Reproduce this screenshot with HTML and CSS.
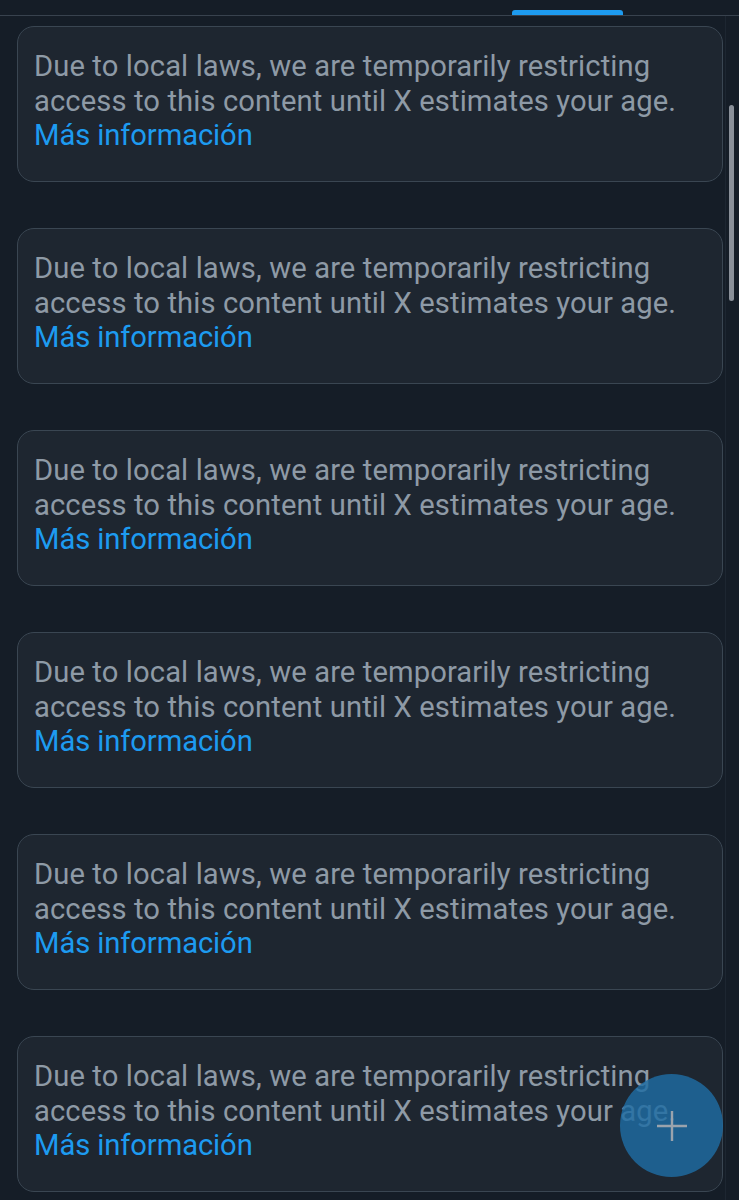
FILE: index.html
```html
<!DOCTYPE html>
<html lang="es">
<head>
<meta charset="utf-8">
<link rel="stylesheet" href="styles.css">
</head>
<body>
<div class="tabs"><div class="indicator"></div></div>
<main class="feed">
  <div class="notice"><p>Due to local laws, we are temporarily restricting access to this content until X estimates your age. <a href="#">Más información</a></p></div>
  <div class="notice"><p>Due to local laws, we are temporarily restricting access to this content until X estimates your age. <a href="#">Más información</a></p></div>
  <div class="notice"><p>Due to local laws, we are temporarily restricting access to this content until X estimates your age. <a href="#">Más información</a></p></div>
  <div class="notice"><p>Due to local laws, we are temporarily restricting access to this content until X estimates your age. <a href="#">Más información</a></p></div>
  <div class="notice"><p>Due to local laws, we are temporarily restricting access to this content until X estimates your age. <a href="#">Más información</a></p></div>
  <div class="notice"><p>Due to local laws, we are temporarily restricting access to this content until X estimates your age. <a href="#">Más información</a></p></div>
</main>
<div class="scrollbar"></div>
<button class="fab" aria-label="Nuevo post">
  <svg width="32" height="32" viewBox="0 0 32 32"><path d="M16 1v30M1 16h30" stroke="#9aa3ad" stroke-width="2.4" fill="none"/></svg>
</button>
</body>
</html>
```
FILE: styles.css
```css
html, body {
  margin: 0;
  padding: 0;
  background: #151d27;
  height: 1200px;
  overflow: hidden;
}
body {
  font-family: Roboto, "Noto Sans", sans-serif;
}
.tabs {
  height: 15px;
  border-bottom: 1px solid #38424e;
  display: flex;
  align-items: flex-end;
}
.indicator {
  margin-left: 512px;
  width: 111px;
  height: 5px;
  border-radius: 3px 3px 0 0;
  background: #1d9bf0;
}
.feed {
  display: flex;
  flex-direction: column;
  gap: 46px;
  padding: 10px 0 0 17px;
  width: 708px;
  border-right: 1px solid #1d2631;
  height: 1200px;
}
.notice {
  width: 704px;
  height: 154px;
  box-sizing: content-box;
  border: 1px solid #3a4652;
  border-radius: 17px;
  background: #1e2630;
  flex: none;
}
.notice p {
  margin: 0;
  padding: 22px 16px 0 16px;
  font-size: 29.2px;
  line-height: 34.5px;
  color: #8e9aa6;
  letter-spacing: 0.1px;
}
.notice a {
  color: #1d9bf0;
  text-decoration: none;
  display: block;
  letter-spacing: -0.1px;
}
.scrollbar {
  position: absolute;
  left: 729px;
  top: 105px;
  width: 5px;
  height: 196px;
  border-radius: 3px;
  background: #8a9099;
}
.fab {
  position: absolute;
  left: 620px;
  top: 1074px;
  width: 103px;
  height: 103px;
  border-radius: 50%;
  border: none;
  padding: 0;
  background: rgba(30, 108, 163, 0.82);
  display: flex;
  align-items: center;
  justify-content: center;
}
```
